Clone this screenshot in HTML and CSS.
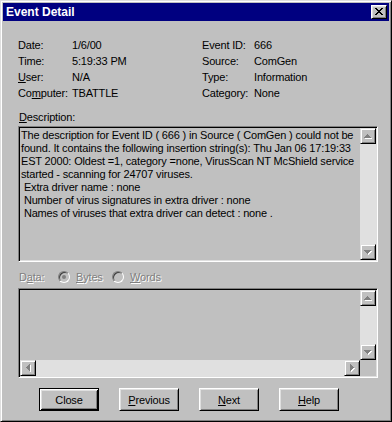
FILE: index.html
```html
<!DOCTYPE html>
<html>
<head>
<meta charset="utf-8">
<link rel="stylesheet" href="styles.css">
</head>
<body>
<div class="win">
  <div class="titlebar">
    <span class="title">Event Detail</span>
    <div class="cap-close">
      <svg width="8" height="7" viewBox="0 0 8 7" shape-rendering="crispEdges">
        <path fill="#000" d="M0 0h2v1h-2zM6 0h2v1h-2zM1 1h2v1h-2zM5 1h2v1h-2zM2 2h4v1h-4zM3 3h2v1h-2zM2 4h4v1h-4zM1 5h2v1h-2zM5 5h2v1h-2zM0 6h2v1h-2zM6 6h2v1h-2z"/>
      </svg>
    </div>
  </div>
  <div class="content">
    <div class="info">
      <div class="col col-left">
        <div class="row"><span class="lbl">Date:</span><span>1/6/00</span></div>
        <div class="row"><span class="lbl">Time:</span><span>5:19:33 PM</span></div>
        <div class="row"><span class="lbl"><u>U</u>ser:</span><span>N/A</span></div>
        <div class="row"><span class="lbl">Co<u>m</u>puter:</span><span>TBATTLE</span></div>
      </div>
      <div class="col col-right">
        <div class="row"><span class="lbl2">Event ID:</span><span>666</span></div>
        <div class="row"><span class="lbl2">Source:</span><span>ComGen</span></div>
        <div class="row"><span class="lbl2">Type:</span><span>Information</span></div>
        <div class="row"><span class="lbl2">Category:</span><span>None</span></div>
      </div>
    </div>
    <div class="desc-label"><u>D</u>escription:</div>
    <div class="box desc">
      <div class="desc-text">The description for Event ID ( 666 ) in Source ( ComGen ) could not be
found. It contains the following insertion string(s): Thu Jan 06 17:19:33
EST 2000: Oldest =1, category =none, VirusScan NT McShield service
started - scanning for 24707 viruses.
 Extra driver name : none
 Number of virus signatures in extra driver : none
 Names of viruses that extra driver can detect : none .</div>
      <div class="vscroll">
        <div class="sbtn"><svg width="8" height="5" viewBox="0 0 8 5" shape-rendering="crispEdges"><path fill="#fff" transform="translate(1 1)" d="M3 0h1v1h1v1h1v1h1v1H0V3h1V2h1V1h1z"/><path fill="#808080" d="M3 0h1v1h1v1h1v1h1v1H0V3h1V2h1V1h1z"/></svg></div>
        <div class="track"></div>
        <div class="sbtn"><svg width="8" height="5" viewBox="0 0 8 5" shape-rendering="crispEdges"><path fill="#fff" transform="translate(1 1)" d="M0 0h7v1h-1v1h-1v1h-1v1h-1V3H2V2H1V1H0z"/><path fill="#808080" d="M0 0h7v1h-1v1h-1v1h-1v1h-1V3H2V2H1V1H0z"/></svg></div>
      </div>
    </div>
    <div class="data-row">
      <span class="dis data-lbl">D<u>a</u>ta:</span>
      <span class="opt opt1"><span class="radio"><span class="dot"></span></span><span class="dis"><u>B</u>ytes</span></span>
      <span class="opt"><span class="radio"></span><span class="dis"><u>W</u>ords</span></span>
    </div>
    <div class="box data">
      <div class="data-area"></div>
      <div class="vscroll">
        <div class="sbtn"><svg width="8" height="5" viewBox="0 0 8 5" shape-rendering="crispEdges"><path fill="#fff" transform="translate(1 1)" d="M3 0h1v1h1v1h1v1h1v1H0V3h1V2h1V1h1z"/><path fill="#808080" d="M3 0h1v1h1v1h1v1h1v1H0V3h1V2h1V1h1z"/></svg></div>
        <div class="track"></div>
        <div class="sbtn"><svg width="8" height="5" viewBox="0 0 8 5" shape-rendering="crispEdges"><path fill="#fff" transform="translate(1 1)" d="M0 0h7v1h-1v1h-1v1h-1v1h-1V3H2V2H1V1H0z"/><path fill="#808080" d="M0 0h7v1h-1v1h-1v1h-1v1h-1V3H2V2H1V1H0z"/></svg></div>
      </div>
      <div class="hscroll">
        <div class="sbtn"><svg width="5" height="8" viewBox="0 0 5 8" shape-rendering="crispEdges"><path fill="#fff" transform="translate(1 1)" d="M3 0h1v7h-1v-1h-1v-1h-1v-1H0V3h1V2h1V1h1z"/><path fill="#808080" d="M3 0h1v7h-1v-1h-1v-1h-1v-1H0V3h1V2h1V1h1z"/></svg></div>
        <div class="track"></div>
        <div class="sbtn"><svg width="5" height="8" viewBox="0 0 5 8" shape-rendering="crispEdges"><path fill="#fff" transform="translate(1 1)" d="M0 0h1v1h1v1h1v1h1v1h-1v1h-1v1h-1v1H0z"/><path fill="#808080" d="M0 0h1v1h1v1h1v1h1v1h-1v1h-1v1h-1v1H0z"/></svg></div>
      </div>
      <div class="corner"></div>
    </div>
    <div class="buttons">
      <div class="btn default">Close</div>
      <div class="btn"><span><u>P</u>revious</span></div>
      <div class="btn"><span><u>N</u>ext</span></div>
      <div class="btn"><span><u>H</u>elp</span></div>
    </div>
  </div>
</div>
</body>
</html>
```

FILE: styles.css
```css
* { box-sizing: border-box; margin: 0; padding: 0; }
html, body { width: 392px; height: 422px; overflow: hidden; }
body {
  background: #c0c0c0;
  font-family: "Liberation Sans", Arial, sans-serif;
  font-size: 11px;
  letter-spacing: -0.17px;
  color: #000;
}
u { text-decoration: underline; text-underline-offset: 1px; }

.win {
  width: 392px;
  height: 422px;
  border: 1px solid;
  border-color: #dfdfdf #000 #000 #dfdfdf;
  box-shadow: inset 1px 1px #fff, inset -1px -1px #808080;
  padding: 2px;
  background: #c0c0c0;
  display: flex;
  flex-direction: column;
}

.titlebar {
  height: 18px;
  flex: none;
  background: #000080;
  display: flex;
  align-items: center;
  justify-content: space-between;
  padding: 0 2px 0 3px;
}
.title { color: #fff; font-weight: bold; font-size: 12px; line-height: 14px; letter-spacing: 0; }
.cap-close {
  width: 16px;
  height: 14px;
  border: 1px solid;
  border-color: #fff #000 #000 #fff;
  box-shadow: inset 1px 1px #dfdfdf, inset -1px -1px #808080;
  background: #c0c0c0;
}
.cap-close svg { display: block; margin: 2px 0 0 3px; }

.content {
  padding: 16px 11px 0 15px;
  display: flex;
  flex-direction: column;
}

.info { display: flex; }
.col-left { width: 184px; }
.row { height: 16px; line-height: 16px; display: flex; white-space: nowrap; }
.lbl { width: 54px; flex: none; }
.lbl2 { width: 52px; flex: none; }

.desc-label { margin-top: 8px; height: 16px; line-height: 16px; padding-left: 1px; }

.box {
  border: 1px solid;
  border-color: #808080 #fff #fff #808080;
  box-shadow: inset 1px 1px #000, inset -1px -1px #dfdfdf;
  padding: 1px;
  background: #c0c0c0;
}
.desc {
  margin-top: 1px;
  width: 360px;
  height: 136px;
  display: flex;
}
.desc-text {
  flex: 1;
  overflow: hidden;
  white-space: pre;
  line-height: 13px;
  padding: 1px 0 0 1px;
}

.vscroll { width: 16px; display: flex; flex-direction: column; }
.hscroll { height: 16px; display: flex; }
.track { flex: 1; background: #e0e0e0; }
.sbtn {
  width: 16px;
  height: 16px;
  flex: none;
  background: #c0c0c0;
  border: 1px solid;
  border-color: #dfdfdf #000 #000 #dfdfdf;
  box-shadow: inset 1px 1px #fff, inset -1px -1px #808080;
  display: flex;
  align-items: center;
  justify-content: center;
}
.sbtn svg { display: block; }

.data-row {
  margin-top: 7px;
  height: 16px;
  display: flex;
  align-items: center;
}
.dis { color: #808080; text-shadow: 1px 1px 0 #fff; }
.data-lbl { width: 40px; padding-left: 1px; }
.opt { display: flex; align-items: center; gap: 6px; }
.opt1 { width: 54px; }
.radio {
  width: 12px;
  height: 12px;
  border-radius: 50%;
  border: 1px solid;
  border-color: #808080 #fff #fff #808080;
  box-shadow: inset 1px 1px 0 #404040;
  background: #c0c0c0;
  display: flex;
  align-items: center;
  justify-content: center;
}
.dot { width: 4px; height: 4px; border-radius: 50%; background: #808080; }

.data {
  margin-top: 3px;
  width: 360px;
  height: 90px;
  display: grid;
  grid-template-columns: 1fr 16px;
  grid-template-rows: 1fr 16px;
}
.corner { background: #c0c0c0; }

.buttons {
  margin-top: 10px;
  padding-left: 21px;
  display: flex;
  gap: 20px;
}
.btn {
  width: 60px;
  height: 23px;
  border: 1px solid;
  border-color: #fff #000 #000 #fff;
  box-shadow: inset 1px 1px #dfdfdf, inset -1px -1px #808080;
  display: flex;
  align-items: center;
  justify-content: center;
  background: #c0c0c0;
}
.btn.default {
  border-color: #000;
  box-shadow: inset 1px 1px #fff, inset -1px -1px #000, inset 2px 2px #dfdfdf, inset -2px -2px #808080;
}
```
